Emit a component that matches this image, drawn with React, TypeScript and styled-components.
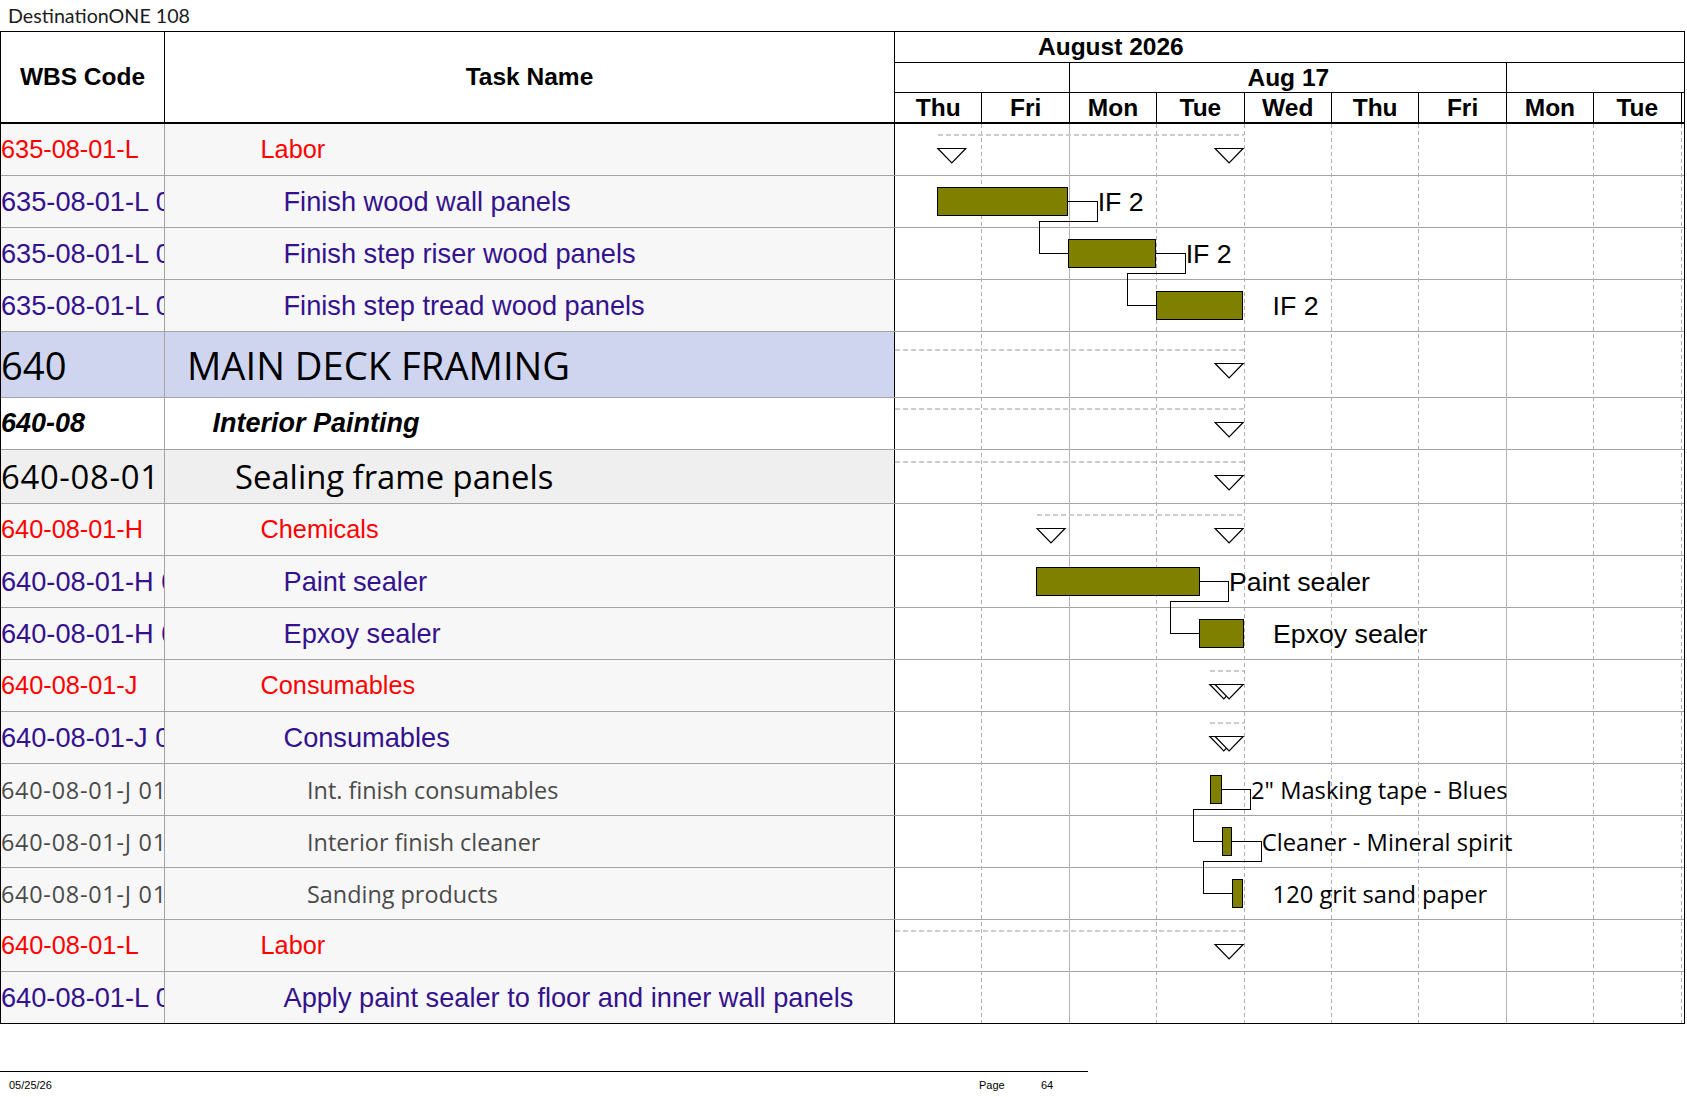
import React from 'react';
import styled, { createGlobalStyle, css } from 'styled-components';

const ARIAL = `"Liberation Sans", Arial, Helvetica, sans-serif`;
const OPEN = `"Open Sans", "Noto Sans", sans-serif`;

const DAY = 87.4;
const GANTT_W = 789;

type Kind = 'red' | 'task' | 'res' | 'top' | 'phase' | 'sub';

interface Row {
  wbs: string;
  name: string;
  kind: Kind;
  level: number;
  h: number;
}

const rows: Row[] = [
  { wbs: '635-08-01-L', name: 'Labor', kind: 'red', level: 4, h: 52 },
  { wbs: '635-08-01-L 01', name: 'Finish wood wall panels', kind: 'task', level: 5, h: 52 },
  { wbs: '635-08-01-L 02', name: 'Finish step riser wood panels', kind: 'task', level: 5, h: 52 },
  { wbs: '635-08-01-L 03', name: 'Finish step tread wood panels', kind: 'task', level: 5, h: 52 },
  { wbs: '640', name: 'MAIN DECK FRAMING', kind: 'top', level: 1, h: 66 },
  { wbs: '640-08', name: 'Interior Painting', kind: 'phase', level: 2, h: 52 },
  { wbs: '640-08-01', name: 'Sealing frame panels', kind: 'sub', level: 3, h: 54 },
  { wbs: '640-08-01-H', name: 'Chemicals', kind: 'red', level: 4, h: 52 },
  { wbs: '640-08-01-H 01', name: 'Paint sealer', kind: 'task', level: 5, h: 52 },
  { wbs: '640-08-01-H 02', name: 'Epxoy sealer', kind: 'task', level: 5, h: 52 },
  { wbs: '640-08-01-J', name: 'Consumables', kind: 'red', level: 4, h: 52 },
  { wbs: '640-08-01-J 01', name: 'Consumables', kind: 'task', level: 5, h: 52 },
  { wbs: '640-08-01-J 01 01', name: 'Int. finish consumables', kind: 'res', level: 6, h: 52 },
  { wbs: '640-08-01-J 01 02', name: 'Interior finish cleaner', kind: 'res', level: 6, h: 52 },
  { wbs: '640-08-01-J 01 03', name: 'Sanding products', kind: 'res', level: 6, h: 52 },
  { wbs: '640-08-01-L', name: 'Labor', kind: 'red', level: 4, h: 52 },
  { wbs: '640-08-01-L 01', name: 'Apply paint sealer to floor and inner wall panels', kind: 'task', level: 5, h: 51 },
];

const indents = [0, 22, 47.5, 70, 95.5, 118.5, 142];

const tops: number[] = [];
let acc = 0;
rows.forEach((r) => {
  tops.push(acc);
  acc += r.h;
});
const BODY_H = acc;
const centerOf = (i: number) => tops[i] + (rows[i].h - 1) / 2;

interface Summary {
  row: number;
  s: number;
  e: number;
  startTri: boolean;
}
const summaries: Summary[] = [
  { row: 0, s: 42.8, e: 348.6, startTri: true },
  { row: 4, s: 0, e: 348.6, startTri: false },
  { row: 5, s: 0, e: 348.6, startTri: false },
  { row: 6, s: 0, e: 348.6, startTri: false },
  { row: 7, s: 142, e: 348.6, startTri: true },
  { row: 10, s: 314.8, e: 348.6, startTri: true },
  { row: 11, s: 314.8, e: 348.6, startTri: true },
  { row: 15, s: 0, e: 348.6, startTri: false },
];

type LabelFont = 'arial' | 'open';
interface Task {
  row: number;
  s: number;
  e: number;
  label: string;
  font: LabelFont;
}
const tasks: Task[] = [
  { row: 1, s: 42.8, e: 172.7, label: 'IF 2', font: 'arial' },
  { row: 2, s: 173.8, e: 260.7, label: 'IF 2', font: 'arial' },
  { row: 3, s: 261.2, e: 347.6, label: 'IF 2', font: 'arial' },
  { row: 8, s: 141, e: 304, label: 'Paint sealer', font: 'arial' },
  { row: 9, s: 304.5, e: 348, label: 'Epxoy sealer', font: 'arial' },
  { row: 12, s: 315.8, e: 326, label: '2" Masking tape - Blues', font: 'open' },
  { row: 13, s: 327, e: 336.8, label: 'Cleaner - Mineral spirit', font: 'open' },
  { row: 14, s: 337.5, e: 347.6, label: '120 grit sand paper', font: 'open' },
];
const links: [number, number][] = [
  [0, 1],
  [1, 2],
  [3, 4],
  [5, 6],
  [6, 7],
];

const days = ['Thu', 'Fri', 'Mon', 'Tue', 'Wed', 'Thu', 'Fri', 'Mon', 'Tue'];

const kindText: Record<Kind, ReturnType<typeof css>> = {
  red: css`
    font-family: ${ARIAL};
    font-size: 25.3px;
    color: #ff0000;
  `,
  task: css`
    font-family: ${ARIAL};
    font-size: 27.2px;
    color: #34128e;
  `,
  res: css`
    font-family: ${OPEN};
    font-size: 23.4px;
    color: #4a4a4a;
  `,
  top: css`
    font-family: ${OPEN};
    font-size: 38.2px;
    color: #000;
  `,
  phase: css`
    font-family: ${ARIAL};
    font-size: 27px;
    font-weight: bold;
    font-style: italic;
    color: #000;
  `,
  sub: css`
    font-family: ${OPEN};
    font-size: 32.8px;
    color: #000;
  `,
};

const wbsExtra: Record<Kind, string> = {
  red: '',
  task: '',
  res: 'letter-spacing: 0.75px;',
  top: '',
  phase: '',
  sub: 'letter-spacing: 0.7px;',
};

const kindBg: Record<Kind, string> = {
  red: '#f7f7f7',
  task: '#f7f7f7',
  res: '#f7f7f7',
  top: '#cfd5ee',
  phase: '#ffffff',
  sub: '#efefef',
};

const GlobalStyle = createGlobalStyle`
  html, body { margin: 0; padding: 0; background: #ffffff; }
  body { font-family: ${ARIAL}; }
  * { box-sizing: border-box; }
`;

const Page = styled.div`
  width: 1687px;
  height: 1097px;
  overflow: hidden;
  display: flex;
  flex-direction: column;
  background: #fff;
`;

const TitleBar = styled.div`
  height: 31px;
  display: flex;
  align-items: center;
  padding-left: 8px;
  font-family: Lato, ${OPEN};
  font-size: 19.7px;
  color: #1c1c1c;
`;

const Sheet = styled.div`
  width: 1685px;
  border: 1px solid #000;
  display: flex;
  flex-direction: column;
`;

const Header = styled.div`
  display: grid;
  grid-template-columns: 164px 730px ${GANTT_W}px;
  height: 92px;
  border-bottom: 2px solid #000;
`;

const HeadCell = styled.div`
  display: flex;
  align-items: center;
  justify-content: center;
  border-right: 1px solid #000;
  font-family: ${ARIAL};
  font-weight: bold;
  font-size: 24.5px;
  color: #000;
`;

const TimeScale = styled.div`
  display: flex;
  flex-direction: column;
  font-family: ${ARIAL};
  font-weight: bold;
  font-size: 24.5px;
  color: #000;
`;

const MonthRow = styled.div`
  height: 31px;
  flex: none;
  border-bottom: 1px solid #000;
  display: flex;
  align-items: center;
  padding-left: 143px;
`;

const ScaleRow = styled.div<{ $h: number; $border?: boolean }>`
  height: ${(p) => p.$h}px;
  flex: none;
  display: flex;
  border-bottom: ${(p) => (p.$border ? '1px solid #000' : 'none')};
`;

const WeekCell = styled.div<{ $w: number; $last?: boolean }>`
  width: ${(p) => p.$w}px;
  flex: none;
  overflow: hidden;
  display: flex;
  align-items: center;
  border-right: ${(p) => (p.$last ? 'none' : '1px solid #000')};
`;

const WeekLabel = styled.span<{ $w: number }>`
  flex: none;
  width: ${(p) => p.$w}px;
  text-align: center;
  white-space: nowrap;
`;

const DayCell = styled.div<{ $w: number; $last?: boolean }>`
  width: ${(p) => p.$w}px;
  flex: none;
  overflow: hidden;
  display: flex;
  align-items: center;
  justify-content: center;
  white-space: nowrap;
  border-right: ${(p) => (p.$last ? 'none' : '1px solid #000')};
`;

const Body = styled.div`
  display: flex;
  height: ${BODY_H}px;
`;

const LeftTable = styled.div`
  width: 894px;
  flex: none;
  display: flex;
  flex-direction: column;
`;

const BodyRow = styled.div<{ $h: number; $bg: string; $last: boolean }>`
  display: grid;
  grid-template-columns: 164px 730px;
  height: ${(p) => p.$h}px;
  flex: none;
  background: ${(p) => p.$bg};
  border-bottom: ${(p) => (p.$last ? 'none' : '1px solid #a3a3a3')};
`;

const WbsCell = styled.div<{ $kind: Kind }>`
  display: flex;
  align-items: center;
  padding-left: 0;
  overflow: hidden;
  white-space: nowrap;
  border-right: 1px solid #a3a3a3;
  ${(p) => kindText[p.$kind]}
  ${(p) => wbsExtra[p.$kind]}
`;

const TaskCell = styled.div<{ $kind: Kind; $level: number }>`
  display: flex;
  align-items: center;
  overflow: hidden;
  white-space: nowrap;
  padding-left: ${(p) => indents[p.$level]}px;
  border-right: 1px solid #000;
  ${(p) => kindText[p.$kind]}
`;

const Chart = styled.svg`
  display: block;
  flex: none;
  background: #fff;
`;

const RowLine = styled.line`
  stroke: #a3a3a3;
  stroke-width: 1;
  shape-rendering: crispEdges;
`;

const DayLine = styled.line<{ $week: boolean }>`
  stroke: ${(p) => (p.$week ? '#b4b4b4' : '#b0b0b0')};
  stroke-width: 1;
  stroke-dasharray: ${(p) => (p.$week ? 'none' : '4 3')};
  shape-rendering: crispEdges;
`;

const SummaryLine = styled.line`
  stroke: #cccccc;
  stroke-width: 2;
  stroke-dasharray: 5 3;
  shape-rendering: crispEdges;
`;

const Milestone = styled.polygon`
  fill: #ffffff;
  stroke: #000;
  stroke-width: 1.2;
`;

const Bar = styled.rect`
  fill: #808000;
  stroke: #000;
  stroke-width: 1;
  shape-rendering: crispEdges;
`;

const Link = styled.polyline`
  fill: none;
  stroke: #000;
  stroke-width: 1;
  shape-rendering: crispEdges;
`;

const BarLabel = styled.text<{ $font: LabelFont }>`
  font-family: ${(p) => (p.$font === 'arial' ? ARIAL : OPEN)};
  font-size: ${(p) => (p.$font === 'arial' ? '26.7px' : '23.7px')};
  fill: #000;
  dominant-baseline: central;
`;

const Footer = styled.div`
  width: 1088px;
  margin-top: 47px;
  border-top: 1px solid #000;
  padding-top: 7px;
  display: grid;
  grid-template-columns: 979px 62px auto;
  font-family: ${ARIAL};
  font-size: 11px;
  line-height: 13px;
  color: #000;
`;

const FootDate = styled.span`
  padding-left: 9px;
`;

const tri = (x: number, t: number) => `${x},${t} ${x + 28},${t} ${x + 14},${t + 14.5}`;

const GanttChart: React.FC = () => (
  <Chart width={GANTT_W} height={BODY_H} viewBox={`0 0 ${GANTT_W} ${BODY_H}`}>
    {rows.slice(0, -1).map((r, i) => (
      <RowLine key={`r${i}`} x1={0} x2={GANTT_W} y1={tops[i] + r.h - 0.5} y2={tops[i] + r.h - 0.5} />
    ))}
    {Array.from({ length: 9 }, (_, k) => k + 1).map((k) => (
      <DayLine
        key={`d${k}`}
        $week={k === 2 || k === 7}
        x1={DAY * k - 0.5}
        x2={DAY * k - 0.5}
        y1={0}
        y2={BODY_H}
      />
    ))}
    {summaries.map((s, i) => {
      const c = centerOf(s.row);
      return (
        <g key={`s${i}`}>
          <SummaryLine x1={s.s} x2={s.e} y1={c - 15} y2={c - 15} />
          {s.startTri && <Milestone points={tri(s.s, c - 1)} />}
          <Milestone points={tri(s.e - 28.5, c - 1)} />
        </g>
      );
    })}
    {links.map(([a, b], i) => {
      const ta = tasks[a];
      const tb = tasks[b];
      const ca = centerOf(ta.row);
      const cb = centerOf(tb.row);
      const tx = ta.e + 29.5;
      const lx = tb.s - 29;
      const pts = `${ta.e},${ca} ${tx},${ca} ${tx},${ca + 20} ${lx},${ca + 20} ${lx},${cb} ${tb.s},${cb}`;
      return <Link key={`l${i}`} points={pts} />;
    })}
    {tasks.map((t, i) => {
      const c = centerOf(t.row);
      return (
        <g key={`t${i}`}>
          <Bar x={t.s} y={c - 14} width={t.e - t.s} height={28} />
          <BarLabel $font={t.font} x={t.e + 30} y={c} dominantBaseline="central">
            {t.label}
          </BarLabel>
        </g>
      );
    })}
  </Chart>
);

const App: React.FC = () => (
  <>
    <GlobalStyle />
    <Page>
      <TitleBar>DestinationONE 108</TitleBar>
      <Sheet>
        <Header>
          <HeadCell>WBS Code</HeadCell>
          <HeadCell>Task Name</HeadCell>
          <TimeScale>
            <MonthRow>August 2026</MonthRow>
            <ScaleRow $h={30} $border>
              <WeekCell $w={DAY * 2} />
              <WeekCell $w={DAY * 5}>
                <WeekLabel $w={DAY * 5}>Aug 17</WeekLabel>
              </WeekCell>
              <WeekCell $w={GANTT_W - DAY * 7} $last>
                <WeekLabel $w={DAY * 5}>Aug 24</WeekLabel>
              </WeekCell>
            </ScaleRow>
            <ScaleRow $h={29}>
              {days.map((d, i) => (
                <DayCell key={i} $w={DAY}>
                  {d}
                </DayCell>
              ))}
              <DayCell $w={GANTT_W - DAY * 9} $last />
            </ScaleRow>
          </TimeScale>
        </Header>
        <Body>
          <LeftTable>
            {rows.map((r, i) => (
              <BodyRow key={i} $h={r.h} $bg={kindBg[r.kind]} $last={i === rows.length - 1}>
                <WbsCell $kind={r.kind}>{r.wbs}</WbsCell>
                <TaskCell $kind={r.kind} $level={r.level}>
                  {r.name}
                </TaskCell>
              </BodyRow>
            ))}
          </LeftTable>
          <GanttChart />
        </Body>
      </Sheet>
      <Footer>
        <FootDate>05/25/26</FootDate>
        <span>Page</span>
        <span>64</span>
      </Footer>
    </Page>
  </>
);

export default App;
